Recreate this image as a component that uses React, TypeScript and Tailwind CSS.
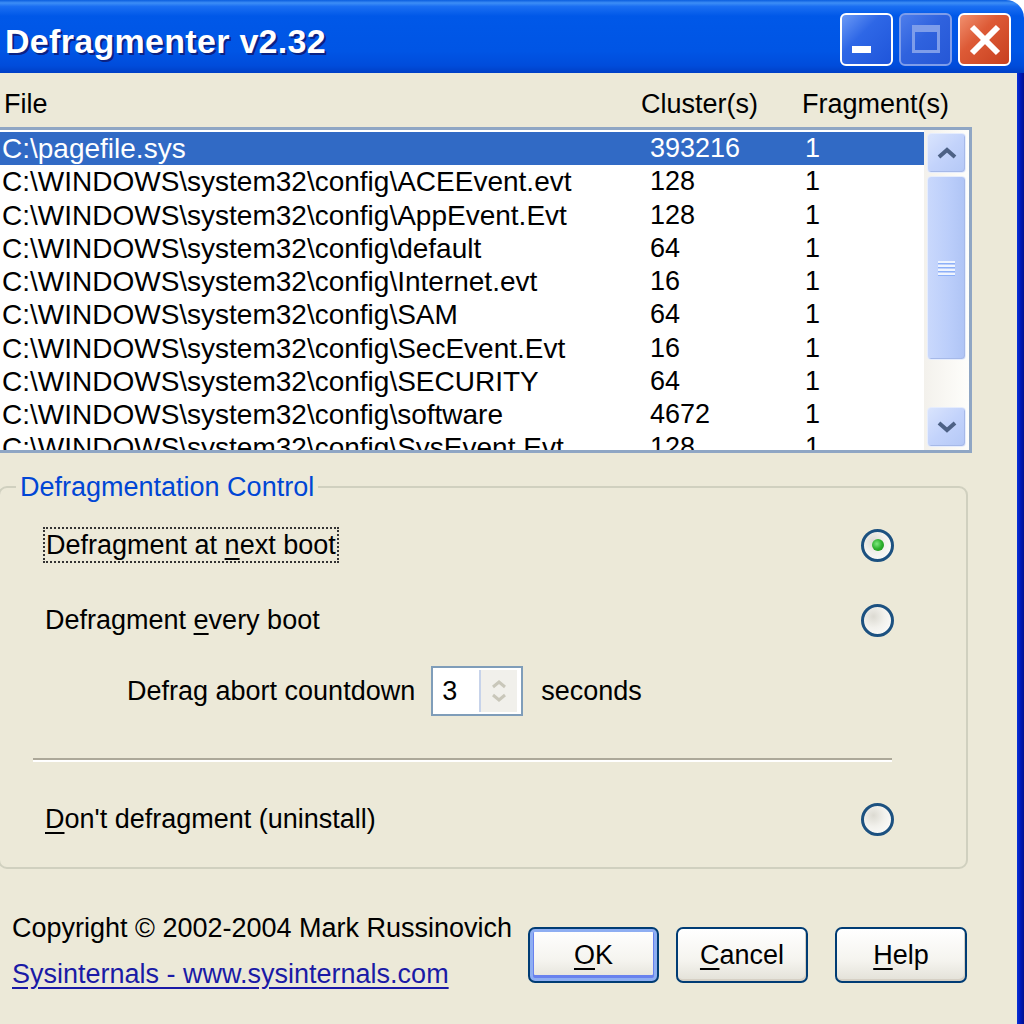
import React from "react";

const rows: [string, string, string][] = [
  ["C:\\pagefile.sys", "393216", "1"],
  ["C:\\WINDOWS\\system32\\config\\ACEEvent.evt", "128", "1"],
  ["C:\\WINDOWS\\system32\\config\\AppEvent.Evt", "128", "1"],
  ["C:\\WINDOWS\\system32\\config\\default", "64", "1"],
  ["C:\\WINDOWS\\system32\\config\\Internet.evt", "16", "1"],
  ["C:\\WINDOWS\\system32\\config\\SAM", "64", "1"],
  ["C:\\WINDOWS\\system32\\config\\SecEvent.Evt", "16", "1"],
  ["C:\\WINDOWS\\system32\\config\\SECURITY", "64", "1"],
  ["C:\\WINDOWS\\system32\\config\\software", "4672", "1"],
  ["C:\\WINDOWS\\system32\\config\\SysEvent.Evt", "128", "1"],
];

function Radio({ checked }: { checked?: boolean }) {
  return (
    <div className="w-[33px] h-[33px] rounded-full border-[3px] border-[#1C5180] bg-[radial-gradient(circle_at_35%_35%,#DCDAD2_0%,#F2F1EC_45%,#FFFFFF_100%)] flex items-center justify-center shrink-0">
      {checked && (
        <div className="w-[12px] h-[12px] rounded-full bg-[radial-gradient(circle_at_40%_40%,#7EE87E_0%,#2DB02D_50%,#1A8A1A_100%)]" />
      )}
    </div>
  );
}

function ScrollBtn({ dir }: { dir: "up" | "down" }) {
  return (
    <div className="h-[40px] rounded-[4px] border border-[#E6EDFD] bg-[linear-gradient(135deg,#D9E4FD_0%,#C3D3FB_50%,#B4C8F6_100%)] shadow-[inset_-1px_-1px_0_#A6B9E8] flex items-center justify-center">
      <svg width="22" height="14" viewBox="0 0 22 14">
        {dir === "up" ? (
          <polyline points="3,11 11,4 19,11" fill="none" stroke="#4D6185" strokeWidth="4" />
        ) : (
          <polyline points="3,3 11,10 19,3" fill="none" stroke="#4D6185" strokeWidth="4" />
        )}
      </svg>
    </div>
  );
}

function XpButton({ children, isDefault }: { children: React.ReactNode; isDefault?: boolean }) {
  return (
    <div
      className={
        "h-[56px] rounded-[7px] border-2 border-[#003C74] bg-[linear-gradient(to_bottom,#FFFFFF_0%,#F5F4EF_60%,#E3E1D8_100%)] flex items-center justify-center text-[27px] " +
        (isDefault ? "shadow-[inset_0_0_0_3px_#8EAEF2,inset_0_-2px_0_4px_#6982EE]" : "shadow-[inset_-1px_-2px_0_#D6D0C5]")
      }
    >
      {children}
    </div>
  );
}

export default function App() {
  return (
    <div className="w-[1024px] h-[1024px] overflow-hidden bg-white flex flex-col font-['Liberation_Sans',Arial,sans-serif] text-black">
      {/* Title bar */}
      <div className="h-[73px] shrink-0 rounded-tr-[18px] bg-[linear-gradient(to_bottom,#0A5DDF_0%,#3D8EF6_4%,#1A6EF2_9%,#0058E8_22%,#0055E5_70%,#004CDB_90%,#003FC6_100%)] flex items-start">
        <div className="pl-[5px] pt-[21px] text-white font-bold text-[34px] leading-[40px] tracking-[0.3px] [text-shadow:2px_2px_0_#0B2283]">
          Defragmenter v2.32
        </div>
        <div className="ml-auto mt-[13px] mr-[13px] flex gap-[6px]">
          <div className="relative w-[53px] h-[53px] rounded-[6px] border-2 border-white bg-[linear-gradient(135deg,#6B9AF6_0%,#2E67E6_40%,#1F55DA_100%)]">
            <div className="absolute left-[10px] top-[31px] w-[19px] h-[7px] bg-white" />
          </div>
          <div className="relative w-[53px] h-[53px] rounded-[6px] border-2 border-[#7E9DEA] bg-[linear-gradient(135deg,#4D7DEB_0%,#2F62DE_45%,#2657D6_100%)]">
            <div className="absolute left-[11px] top-[10px] w-[28px] h-[28px] border-[3px] border-t-[7px] border-[#7E9DEA]" />
          </div>
          <div className="relative w-[53px] h-[53px] rounded-[6px] border-2 border-white bg-[linear-gradient(135deg,#F0906F_0%,#DD5A36_40%,#C7401F_100%)] flex items-center justify-center">
            <svg width="32" height="32" viewBox="0 0 32 32">
              <line x1="3" y1="3" x2="29" y2="29" stroke="white" strokeWidth="6" />
              <line x1="29" y1="3" x2="3" y2="29" stroke="white" strokeWidth="6" />
            </svg>
          </div>
        </div>
      </div>

      <div className="flex flex-1">
        {/* Dialog body */}
        <div className="flex-1 bg-[#ECE9D8] flex flex-col">
          {/* Column headers */}
          <div className="mt-[15px] h-[32px] leading-[32px] text-[27px] flex">
            <div className="pl-[4px] w-[641px]">File</div>
            <div className="w-[161px]">Cluster(s)</div>
            <div>Fragment(s)</div>
          </div>

          {/* List box */}
          <div className="mt-[7px] ml-[-4px] w-[976px] h-[326px] border-[3px] border-[#8FA6C4] bg-white flex">
            <div className="flex-1 pt-[2px] overflow-hidden text-[28px]">
              {rows.map((r, i) => (
                <div
                  key={i}
                  className={
                    "h-[33.25px] leading-[33px] flex whitespace-nowrap " +
                    (i === 0 ? "bg-[#316AC5] text-white" : "")
                  }
                >
                  <div className="pl-[3px] w-[651px]">{r[0]}</div>
                  <div className="w-[155px] text-[27px]">{r[1]}</div>
                  <div className="text-[27px]">{r[2]}</div>
                </div>
              ))}
            </div>
            <div className="w-[45px] bg-[linear-gradient(to_right,#F3F1EC,#FEFEFB)] flex flex-col px-[3px] py-[3px]">
              <ScrollBtn dir="up" />
              <div className="mt-[3px] h-[184px] rounded-[4px] border border-[#E6EDFD] bg-[linear-gradient(to_right,#C9D8FC_0%,#BACDFA_60%,#AFC4F5_100%)] shadow-[inset_-1px_-1px_0_#A6B9E8] flex flex-col items-center justify-center gap-[2px]">
                <div className="w-[17px] h-[2px] bg-[#EEF4FE] shadow-[0_1px_0_#8CB0F8]" />
                <div className="w-[17px] h-[2px] bg-[#EEF4FE] shadow-[0_1px_0_#8CB0F8]" />
                <div className="w-[17px] h-[2px] bg-[#EEF4FE] shadow-[0_1px_0_#8CB0F8]" />
                <div className="w-[17px] h-[2px] bg-[#EEF4FE] shadow-[0_1px_0_#8CB0F8]" />
              </div>
              <div className="flex-1" />
              <ScrollBtn dir="down" />
            </div>
          </div>

          {/* Group box */}
          <fieldset className="mt-[18px] ml-[-2px] w-[970px] border-2 border-[#D0D0BF] rounded-[9px] pb-[30px]">
            <legend className="ml-[16px] px-[4px] text-[27px] leading-[32px] text-[#0046D5]">
              Defragmentation Control
            </legend>
            <div className="mt-[24px] h-[36px] flex items-center pl-[43px] pr-[72px] text-[27px]">
              <div className="border-2 border-dotted border-[#333] px-[1px] leading-[32px]">
                Defragment at <span className="underline underline-offset-[4px]">n</span>ext boot
              </div>
              <div className="ml-auto">
                <Radio checked />
              </div>
            </div>
            <div className="mt-[39px] h-[36px] flex items-center pl-[45px] pr-[72px] text-[27px]">
              <div>
                Defragment <span className="underline underline-offset-[4px]">e</span>very boot
              </div>
              <div className="ml-auto">
                <Radio />
              </div>
            </div>
            <div className="mt-[28px] h-[50px] flex items-center pl-[127px] text-[27px]">
              <div>Defrag abort countdown</div>
              <div className="ml-[16px] w-[92px] h-[50px] border-2 border-[#7F9DB9] bg-white flex">
                <div className="w-[46px] pl-[9px] leading-[46px]">3</div>
                <div className="w-[2px] my-[2px] bg-[#C7D3EA]" />
                <div className="w-[36px] my-[2px] bg-[#F1F0EB] flex flex-col items-center justify-center gap-[4px]">
                  <svg width="16" height="10" viewBox="0 0 16 10">
                    <polyline points="2,8 8,3 14,8" fill="none" stroke="#C9C7BA" strokeWidth="3" />
                  </svg>
                  <svg width="16" height="10" viewBox="0 0 16 10">
                    <polyline points="2,2 8,7 14,2" fill="none" stroke="#C9C7BA" strokeWidth="3" />
                  </svg>
                </div>
              </div>
              <div className="ml-[18px]">seconds</div>
            </div>
            <div className="mt-[42px] ml-[33px] w-[859px] border-t-2 border-b-2 border-t-[#ACA899] border-b-white" />
            <div className="mt-[39px] h-[36px] flex items-center pl-[45px] pr-[72px] text-[27px]">
              <div>
                <span className="underline underline-offset-[4px]">D</span>on't defragment (uninstall)
              </div>
              <div className="ml-auto">
                <Radio />
              </div>
            </div>
          </fieldset>

          {/* Footer */}
          <div className="mt-[43px] flex items-start">
            <div className="ml-[12px] w-[516px] text-[27px] leading-[32px] whitespace-nowrap">
              <div>Copyright © 2002-2004 Mark Russinovich</div>
              <div className="mt-[14px] text-[#1A1AA6] underline underline-offset-[4px]">
                Sysinternals - www.sysinternals.com
              </div>
            </div>
            <div className="mt-[15px] w-[131px]">
              <XpButton isDefault>
                <span className="underline underline-offset-[4px]">O</span>K
              </XpButton>
            </div>
            <div className="mt-[15px] ml-[17px] w-[132px]">
              <XpButton>
                <span className="underline underline-offset-[4px]">C</span>ancel
              </XpButton>
            </div>
            <div className="mt-[15px] ml-[27px] w-[132px]">
              <XpButton>
                <span className="underline underline-offset-[4px]">H</span>elp
              </XpButton>
            </div>
          </div>
        </div>
        {/* Right window frame */}
        <div className="w-[7px] bg-[linear-gradient(to_right,#0831D9,#0019B8,#001090)]" />
      </div>
    </div>
  );
}
